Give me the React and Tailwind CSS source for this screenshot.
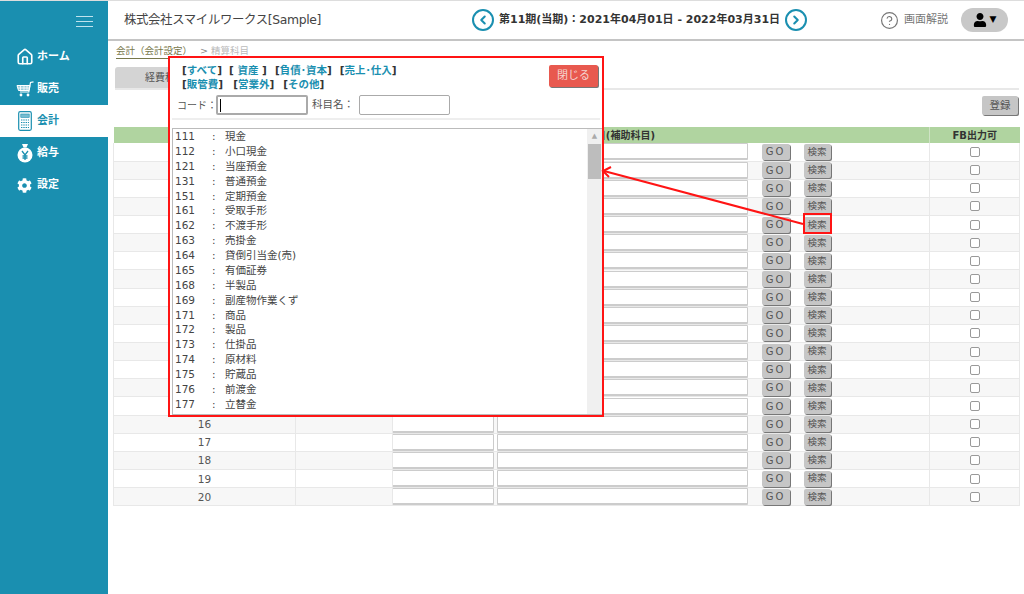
import { ChevronLeft, ChevronRight, CircleHelp, Home } from 'lucide-react';
import { FaCog, FaUser } from 'react-icons/fa';

const FONT = { fontFamily: '"DejaVu Sans", "Noto Sans CJK JP", sans-serif' };

const accounts = [
  ['111', '現金'], ['112', '小口現金'], ['121', '当座預金'], ['131', '普通預金'], ['151', '定期預金'],
  ['161', '受取手形'], ['162', '不渡手形'], ['163', '売掛金'], ['164', '貸倒引当金(売)'], ['165', '有価証券'],
  ['168', '半製品'], ['169', '副産物作業くず'], ['171', '商品'], ['172', '製品'], ['173', '仕掛品'],
  ['174', '原材料'], ['175', '貯蔵品'], ['176', '前渡金'], ['177', '立替金'],
];

const MoneyBag = () => (
  <svg width="18" height="20" viewBox="0 0 18 20">
    <path d="M6 1h6l-1.5 3.5h-3z" fill="#fff" />
    <circle cx="9" cy="12" r="7.5" fill="#fff" />
    <path d="M6 8l3 4 3-4M9 12v5M6.5 13h5M6.5 15h5" stroke="#1a8fb0" strokeWidth="1.3" fill="none" />
  </svg>
);

const Cart = () => (
  <svg width="18" height="16" viewBox="0 0 18 16" fill="none" stroke="#fff">
    <path d="M17.5 0.8 L14.5 1.5 L12.8 11 H4" strokeWidth="1.2" />
    <path d="M1 4.5 H14 L13 9.5 H2.5 Z" fill="#fff" fillOpacity="0.55" strokeWidth="1" />
    <path d="M4.5 4.5 V9.5 M8 4.5 V9.5 M11 4.5 V9.5 M1.8 7 H13.5" strokeWidth="0.8" />
    <circle cx="5" cy="14" r="1.4" fill="#fff" stroke="none" />
    <circle cx="12" cy="14" r="1.4" fill="#fff" stroke="none" />
  </svg>
);

const Calc = () => (
  <svg width="14" height="20" viewBox="0 0 14 20" fill="none" stroke="#1a8fb0">
    <rect x="0.7" y="0.7" width="12.6" height="18.6" rx="1.5" strokeWidth="1.2" />
    <rect x="2.8" y="3" width="8.4" height="3.4" fill="#1a8fb0" fillOpacity="0.6" strokeWidth="0.6" />
    <path d="M3 9h8M3 11.5h8M3 14h8M3 16.5h8" strokeWidth="1.2" strokeDasharray="1.4 0.9" />
  </svg>
);

const NavItem = ({ icon, label, active }) => (
  <div className={`h-8 flex items-center pl-3 ${active ? 'bg-white text-[#1a8fb0]' : 'text-white'}`}>
    <span className="w-[25px] flex justify-center">{icon}</span>
    <span className="text-[11px] font-bold">{label}</span>
  </div>
);

const GrayButton = ({ children, className = '' }) => (
  <button className={`bg-[#c6c6c6] rounded-[2px] text-[#555] shadow-[1px_1px_0_#777] flex items-center justify-center ${className}`}>
    {children}
  </button>
);

const Bracket = ({ label, className = '' }) => (
  <span className={`text-[#333] font-bold ${className}`}>
    [<span className="text-[#1a8fb0]">{label}</span>]
  </span>
);

export default function App() {
  const rows = Array.from({ length: 20 }, (_, i) => i + 1);

  return (
    <div className="relative w-[1024px] h-[594px] overflow-hidden bg-white flex border-t border-[#ddd]" style={FONT}>
      <aside className="w-[108px] shrink-0 bg-[#1a8fb0]">
        <div className="h-[40px] flex flex-col items-end justify-center gap-[4px] pr-[15px]">
          <span className="w-[17px] h-px bg-[#bfe3ee]" />
          <span className="w-[17px] h-px bg-[#bfe3ee]" />
          <span className="w-[17px] h-px bg-[#bfe3ee]" />
        </div>
        <NavItem icon={<Home size={18} strokeWidth={2.2} />} label="ホーム" />
        <NavItem icon={<Cart />} label="販売" />
        <NavItem icon={<Calc />} label="会計" active />
        <NavItem icon={<MoneyBag />} label="給与" />
        <NavItem icon={<FaCog size={15} />} label="設定" />
      </aside>

      <main className="flex-1 min-w-0 flex flex-col">
        <header className="h-[40px] shrink-0 border-b-2 border-[#c4c4c4] flex items-center pl-4 pr-[16px]">
          <span className="w-[348px] text-[12.4px] text-[#444] tracking-[-0.35px]">株式会社スマイルワークス[Sample]</span>
          <button className="w-[22px] h-[22px] rounded-full border-2 border-[#1a8fb0] text-[#1a8fb0] flex items-center justify-center">
            <ChevronLeft size={14} strokeWidth={3.5} />
          </button>
          <span className="mx-[5px] text-[11px] font-bold text-[#333] whitespace-nowrap">第11期(当期)：2021年04月01日 - 2022年03月31日</span>
          <button className="w-[22px] h-[22px] rounded-full border-2 border-[#1a8fb0] text-[#1a8fb0] flex items-center justify-center">
            <ChevronRight size={14} strokeWidth={3.5} />
          </button>
          <div className="ml-auto flex items-center">
            <CircleHelp size={19} strokeWidth={1.5} className="text-[#777]" />
            <span className="ml-[5px] text-[11px] text-[#777]">画面解説</span>
            <div className="ml-[13px] w-[47px] h-[24px] rounded-full bg-[#c8c8c8] flex items-center justify-center gap-[3px]">
              <FaUser size={14} className="text-black" />
              <span className="text-[9px] text-black">▼</span>
            </div>
          </div>
        </header>

        <div className="h-[15px] mt-[3px] pl-2 text-[9.5px] flex items-center">
          <span className="text-[#77774a] border-b border-[#77774a]">会計（会計設定）</span>
          <span className="ml-[8px] text-[#888]">&gt;</span>
          <span className="ml-[3px] text-[#bbb]">精算科目</span>
        </div>

        <div className="mt-[8px] ml-[7px] mr-[5px] h-[23px] border-b-2 border-[#e8e8e8]">
          <div className="w-[100px] h-[21px] bg-[#d4d4d4] rounded-t-[3px] text-[10px] text-[#555] flex items-center justify-center">経費科目</div>
        </div>

        <div className="h-[37px] flex justify-end items-start pt-[6px] pr-[6px]">
          <GrayButton className="w-[36px] h-[19px] text-[10.5px]">登録</GrayButton>
        </div>

        <table className="ml-[5px] w-[906px] table-fixed border-collapse text-[10px] text-[#555]">
          <colgroup>
            <col className="w-[182px]" />
            <col className="w-[97px]" />
            <col className="w-[104px]" />
            <col className="w-[258px]" />
            <col className="w-[42px]" />
            <col className="w-[133px]" />
            <col className="w-[90px]" />
          </colgroup>
          <thead>
            <tr className="h-[16px] bg-[#b0d4a0] font-bold text-[#333]">
              <th className="font-bold">No</th>
              <th className="font-bold">部門</th>
              <th colSpan={4} className="font-bold text-right pr-[274px]">勘定科目(補助科目)</th>
              <th className="font-bold border-l border-[#cfe3c5]">FB出力可</th>
            </tr>
          </thead>
          <tbody>
            {rows.map((n) => (
              <tr key={n} className={`h-[18.15px] border-b border-[#e8e8e8] ${n % 2 === 0 ? 'bg-[#f7f7f7]' : 'bg-white'}`}>
                <td className="text-center p-0 text-[10.5px] leading-[14px] border-l border-[#e8e8e8]">{n}</td>
                <td className="p-0 border-l border-[#e8e8e8]" />
                <td className="p-0 border-l border-[#e8e8e8]">
                  <input className="block -ml-px w-[102px] h-[17px] bg-white border border-[#ccc] border-b-2 rounded-[1px]" />
                </td>
                <td className="p-0">
                  <input className="block w-[251px] h-[17px] bg-white border border-[#ccc] border-b-2 rounded-[1px]" />
                </td>
                <td className="p-0 pl-[7px]" colSpan={2}>
                  <div className="flex gap-[14px]">
                    <GrayButton className="w-[28px] h-[16px] text-[10px] tracking-[2px]">GO</GrayButton>
                    <GrayButton className="w-[27px] h-[16px] text-[9.5px]">検索</GrayButton>
                  </div>
                </td>
                <td className="p-0 border-l border-r border-[#e8e8e8]">
                  <div className="flex justify-center">
                    <span className="w-[10px] h-[10px] rounded-[2px] border border-[#999] bg-white" />
                  </div>
                </td>
              </tr>
            ))}
          </tbody>
        </table>
      </main>

      {/* account search popup */}
      <div className="absolute left-[168px] top-[55px] w-[436px] h-[361px] border-2 border-[#ff1414] bg-white flex flex-col text-[10.5px]">
        <div className="relative h-[62px] mx-[2px] border-b-2 border-[#eee] pl-[10px] pt-[5px]">
          <div className="leading-[14px] h-[14px] flex">
            <Bracket label="すべて" />
            <Bracket label=" 資産 " className="ml-[7px] whitespace-pre" />
            <Bracket label="負債･資本" className="ml-[8px]" />
            <Bracket label="売上･仕入" className="ml-[8px]" />
          </div>
          <div className="leading-[14px] h-[14px] flex">
            <Bracket label="販管費" />
            <Bracket label="営業外" className="ml-[10px]" />
            <Bracket label="その他" className="ml-[9px]" />
          </div>
          <div className="mt-[4px] -ml-[5px] flex items-center text-[#555]">
            <span className="w-[40px] text-[10px] whitespace-nowrap">コード：</span>
            <span className="-ml-px w-[92px] h-[20px] border-2 border-[#aaa] rounded-[2px] pl-[2px] flex items-center">
              <span className="w-px h-[13px] bg-black" />
            </span>
            <span className="ml-[4px] w-[47px] whitespace-nowrap">科目名：</span>
            <span className="w-[91px] h-[20px] border border-[#aaa] rounded-[2px]" />
          </div>
          <button className="absolute right-[2px] top-[7px] w-[49px] h-[22px] rounded-[2px] bg-[#e8594f] text-[#f5d5d0] text-[11px] shadow-[1px_1px_0_#777] flex items-center justify-center">閉じる</button>
        </div>

        <div className="mt-[8px] ml-[2px] flex-1 min-h-0 border border-[#bbb] border-r-0 flex overflow-hidden">
          <ul className="flex-1 pl-[2px] text-[#444]">
            {accounts.map(([code, name]) => (
              <li key={code} className="h-[14.88px] leading-[14.88px] flex text-[10.5px]">
                <span className="w-[37px]">{code}</span>
                <span className="w-[13px]">:</span>
                <span>{name}</span>
              </li>
            ))}
          </ul>
          <div className="w-[15px] bg-[#f0f0f0] flex flex-col">
            <div className="h-[15px] flex items-center justify-center text-[7px] text-[#aaa]">▲</div>
            <div className="h-[35px] bg-[#bdbdbd] mx-[1px]" />
          </div>
        </div>
      </div>

      {/* annotation: red box and arrow */}
      <div className="absolute left-[803px] top-[212px] w-[29px] h-[21px] border-2 border-[#ff1414]" />
      <svg className="absolute left-0 -top-px pointer-events-none" width="1024" height="594">
        <path d="M803 224 L604 171" stroke="#ff1414" strokeWidth="2" fill="none" />
        <path d="M611 167 L603 171 L609 177" stroke="#ff1414" strokeWidth="2" fill="none" />
      </svg>
    </div>
  );
}
